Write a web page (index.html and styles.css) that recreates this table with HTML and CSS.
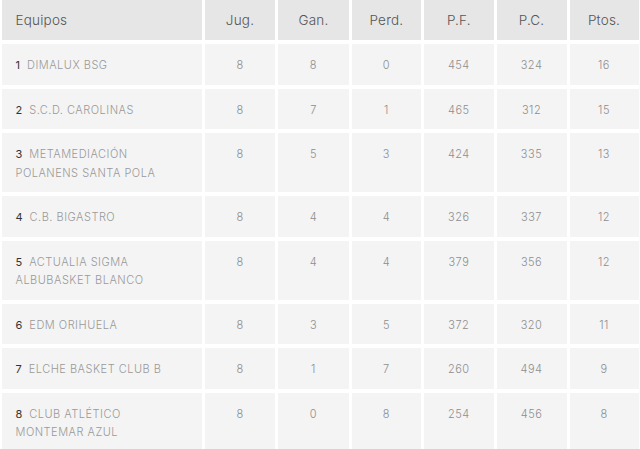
FILE: index.html
```html
<!DOCTYPE html>
<html lang="es">
<head>
<meta charset="utf-8">
<title>Clasificación</title>
<link rel="stylesheet" href="styles.css">
</head>
<body>
<table class="standings">
  <colgroup>
    <col class="c-team"><col class="c-num"><col class="c-num"><col class="c-num2"><col class="c-num2"><col class="c-num3"><col class="c-num4">
  </colgroup>
  <thead>
    <tr>
      <th class="team-h">Equipos</th>
      <th>Jug.</th>
      <th>Gan.</th>
      <th>Perd.</th>
      <th>P.F.</th>
      <th>P.C.</th>
      <th>Ptos.</th>
    </tr>
  </thead>
  <tbody>
    <tr><td class="team"><span class="rank">1</span>DIMALUX BSG</td><td>8</td><td>8</td><td>0</td><td>454</td><td>324</td><td>16</td></tr>
    <tr><td class="team"><span class="rank">2</span>S.C.D. CAROLINAS</td><td>8</td><td>7</td><td>1</td><td>465</td><td>312</td><td>15</td></tr>
    <tr><td class="team"><span class="rank">3</span>METAMEDIACIÓN<br>POLANENS SANTA POLA</td><td>8</td><td>5</td><td>3</td><td>424</td><td>335</td><td>13</td></tr>
    <tr><td class="team"><span class="rank">4</span>C.B. BIGASTRO</td><td>8</td><td>4</td><td>4</td><td>326</td><td>337</td><td>12</td></tr>
    <tr><td class="team"><span class="rank">5</span>ACTUALIA SIGMA<br>ALBUBASKET BLANCO</td><td>8</td><td>4</td><td>4</td><td>379</td><td>356</td><td>12</td></tr>
    <tr><td class="team"><span class="rank">6</span>EDM ORIHUELA</td><td>8</td><td>3</td><td>5</td><td>372</td><td>320</td><td>11</td></tr>
    <tr><td class="team"><span class="rank">7</span>ELCHE BASKET CLUB B</td><td>8</td><td>1</td><td>7</td><td>260</td><td>494</td><td>9</td></tr>
    <tr><td class="team"><span class="rank">8</span>CLUB ATLÉTICO<br>MONTEMAR AZUL</td><td>8</td><td>0</td><td>8</td><td>254</td><td>456</td><td>8</td></tr>
  </tbody>
</table>
</body>
</html>
```
FILE: styles.css
```css
html, body {
  margin: 0;
  padding: 0;
  background: #ffffff;
  overflow: hidden;
}
body {
  font-family: Inter, "Open Sans", "Liberation Sans", sans-serif;
}
.standings {
  table-layout: fixed;
  border-collapse: separate;
  border-spacing: 3.5px 4px;
  margin: -4px 0 0 -1.5px;
  width: 643px;
}
.c-team { width: 199px; }
.c-num { width: 70px; }
.c-num2 { width: 69px; }
.c-num3 { width: 69.5px; }
.c-num4 { width: 68.5px; }

.standings th {
  background: #e6e6e6;
  color: #555555;
  font-weight: 300;
  font-size: 13.5px;
  letter-spacing: 0.2px;
  height: 40px;
  padding: 0;
  text-align: center;
  vertical-align: middle;
  box-sizing: border-box;
}
.standings th.team-h {
  text-align: left;
  padding-left: 14px;
}
.standings td {
  background: #f4f4f4;
  color: #8e8e8e;
  font-weight: 300;
  font-size: 11px;
  letter-spacing: 0.5px;
  line-height: 18.5px;
  padding: 12px 0 10px;
  text-align: center;
  vertical-align: top;
}
.standings td.team {
  text-align: left;
  padding-left: 14px;
  color: #999999;
}
.rank {
  color: #333333;
  font-weight: 400;
  letter-spacing: 0;
  margin-right: 7px;
}
```
